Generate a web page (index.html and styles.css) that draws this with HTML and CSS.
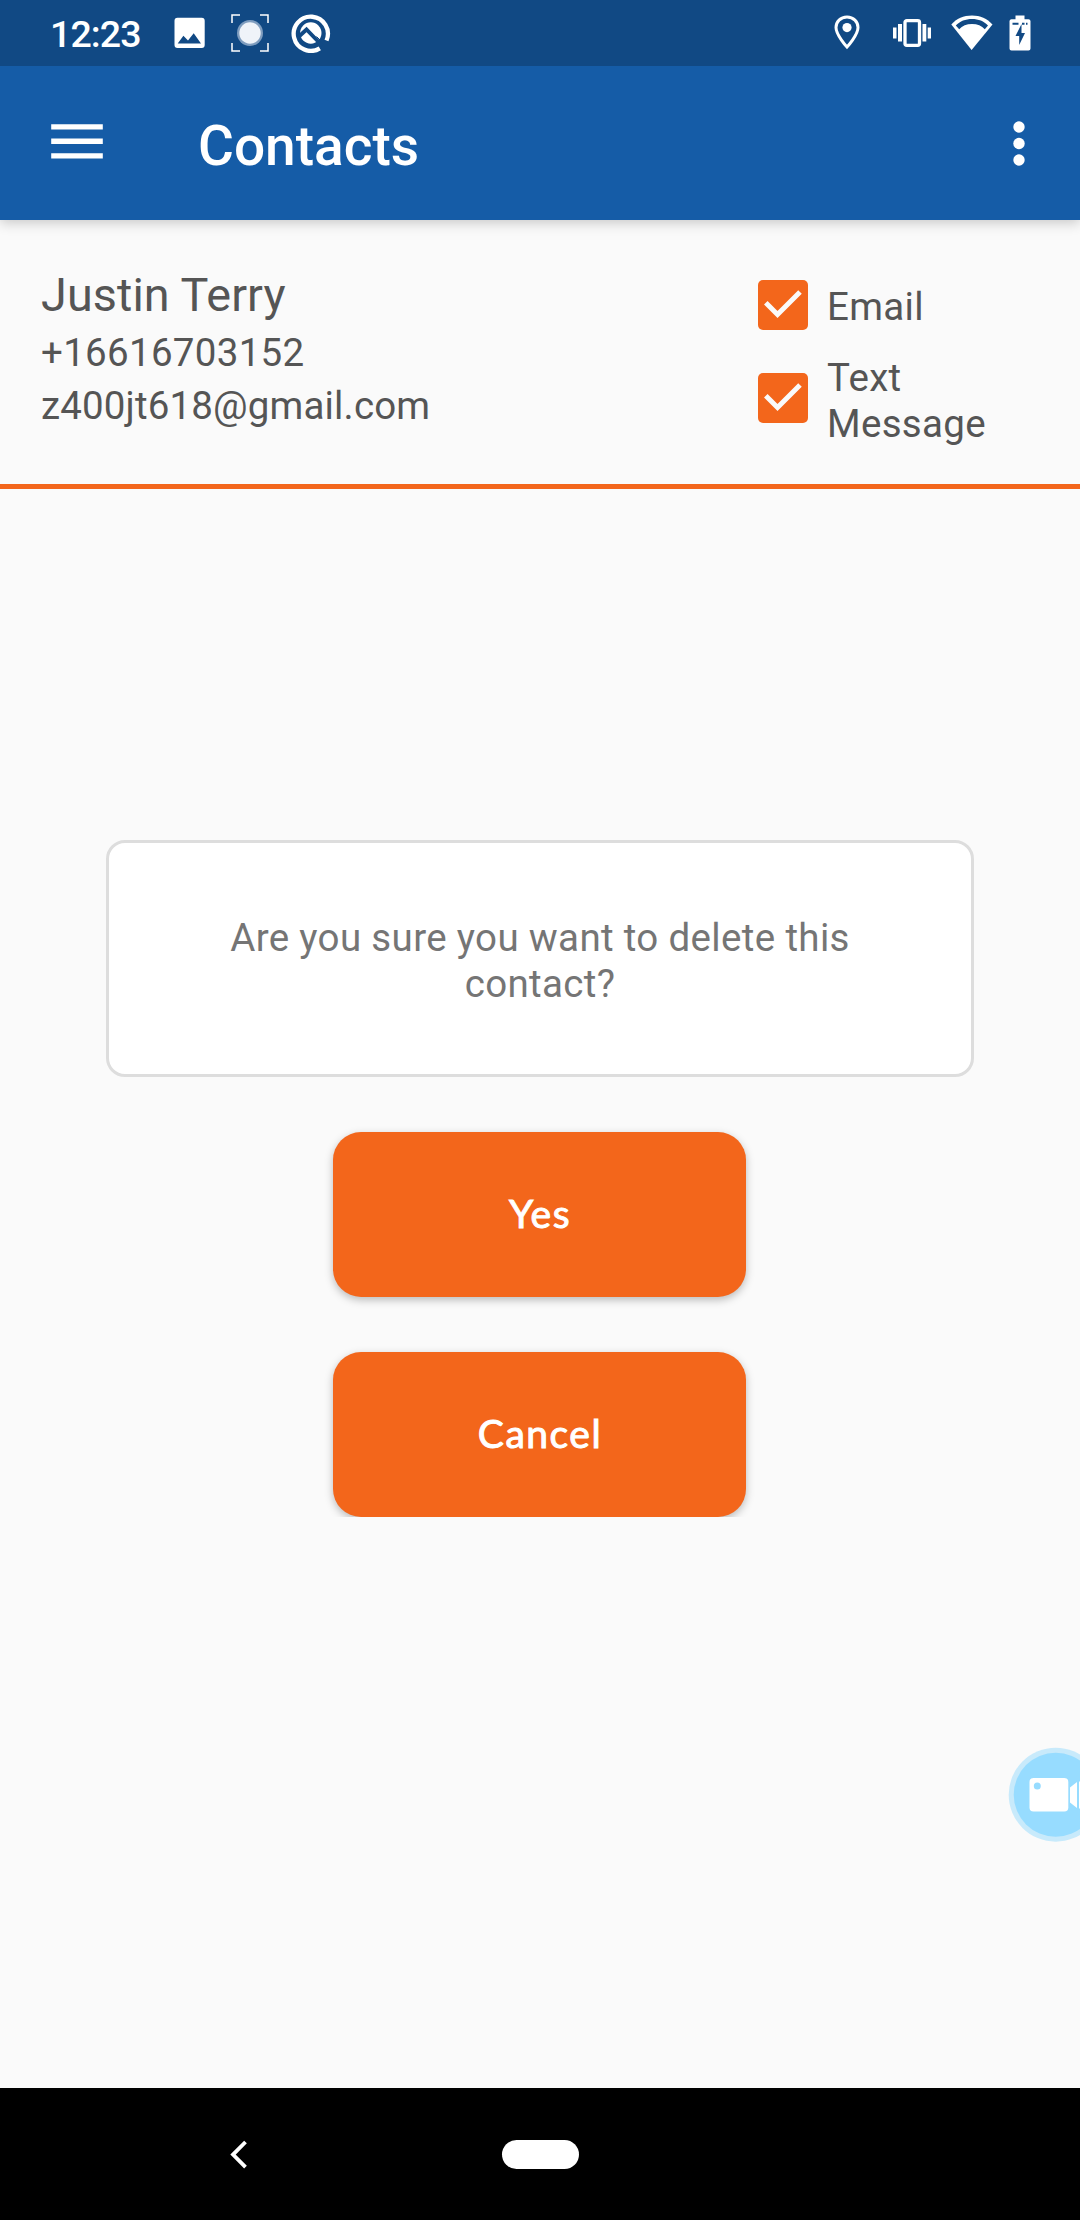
FILE: index.html
```html
<!DOCTYPE html>
<html lang="en">
<head>
<meta charset="utf-8">
<title>Contacts</title>
<link rel="stylesheet" href="styles.css">
</head>
<body>
<div class="screen">
  <header class="status">
    <span class="clock">12:23</span>
    <svg class="photo-icon" width="32" height="32" viewBox="0 0 32 32"><path fill="#fff" fill-rule="evenodd" d="M3.500.7h24.200a3 3 0 0 1 3 3v24.200a3 3 0 0 1-3 3H3.500a3 3 0 0 1-3-3V3.700a3 3 0 0 1 3-3ZM3.700 26.500H27L19.700 16.300 14 23.600 9.400 18.800Z"/></svg>
    <svg class="focus-icon" width="38" height="38" viewBox="0 0 38 38"><path d="M1 9V1h8M29 1h8v8M37 29v8h-8M9 37H1v-8" fill="none" stroke="#fff" stroke-width="1.500"/><circle cx="19" cy="19" r="13" fill="#7f9dbf"/><circle cx="19" cy="19" r="10.700" fill="#eff3f9"/></svg>
    <svg class="ring-icon" width="40" height="40" viewBox="0 0 40 40"><path d="M28.800 35.300A17.100 17.100 0 1 1 35.500 27.500" fill="none" stroke="#fff" stroke-width="4.300"/><circle cx="19.800" cy="20" r="10.700" fill="#fff"/><path d="M8.500 23 15.500 16.500 31 32.500" fill="none" stroke="#114984" stroke-width="3.800"/><path d="m25.500 23.500 10 10" stroke="#114984" stroke-width="1"/></svg>
    <svg class="pin-icon" width="26" height="36" viewBox="0 0 26 36"><path d="M13 2C6.500 2 2 6.700 2 12.500 2 20 13 32 13 32s11-12 11-19.500C24 6.700 19.500 2 13 2Z" fill="none" stroke="#fff" stroke-width="3"/><circle cx="13" cy="12.600" r="4.600" fill="#fff"/></svg>
    <svg class="vibrate-icon" width="38" height="28" viewBox="0 0 38 28"><rect x="12" y="1.700" width="14.500" height="24.600" rx="1.800" fill="none" stroke="#fff" stroke-width="3.300"/><path fill="#fff" d="M0 8.500h3.500v11H0zM5 5h4v17.500H5zM29.500 5h3.800v17.500h-3.800zM34.700 8.500H38v11h-3.300z"/></svg>
    <svg class="wifi-icon" width="42" height="36" viewBox="0 0 42 36"><path fill="#fff" d="M21 .5C12.500.5 5.500 3.600.3 9.500L20.600 35 41.500 9.500C36 3.600 29.300.5 21 .5Z"/><path d="M4.800 10.500C9 6 14.500 3.900 21 3.900S33 6 37 10.500L33.800 14.200C30.700 10.700 26.500 8.900 21 8.900s-9.700 1.800-12.800 5.300Z" fill="#114984"/></svg>
    <svg class="battery-icon" width="22" height="36" viewBox="0 0 22 36"><path fill="#fff" d="M6.500.5h9v3.700h4A2 2 0 0 1 21.500 6v27.500a2 2 0 0 1-2 2h-17a2 2 0 0 1-2-2V6a2 2 0 0 1 2-1.800h4Z"/><path fill="#114984" d="M12.500 9 6.500 21h3.700v9L16 18h-3.500zM3.500 7.800h6v2h-6zM13 7.800h2.500v2H13zM17 7.800h1.500v2H17z"/></svg>
  </header>
  <div class="toolbar">
    <svg class="menu-icon" width="52" height="36" viewBox="0 0 52 36"><path fill="#fff" d="M.2.200h51.600v5.300H.2zM.2 14.600h51.600v5.300H.2zM.2 29.300h51.600v5.300H.2z"/></svg>
    <h1 class="title">Contacts</h1>
    <svg class="more-icon" width="12" height="45" viewBox="0 0 12 45" fill="#fff"><circle cx="6" cy="6" r="5.700"/><circle cx="6" cy="22.500" r="5.700"/><circle cx="6" cy="39" r="5.700"/></svg>
  </div>
  <section class="contact">
    <div class="person">
      <div class="name">Justin Terry</div>
      <div class="phone">+16616703152</div>
      <div class="mail">z400jt618@gmail.com</div>
    </div>
    <div class="options">
      <div class="option">
        <svg class="check" width="50" height="50" viewBox="0 0 50 50"><rect width="50" height="50" rx="5" fill="#f3661b"/><path d="M7.800 22.700 19.500 34.400 42 11.900" fill="none" stroke="#fafafa" stroke-width="5"/></svg>
        <span class="option-label">Email</span>
      </div>
      <div class="option">
        <svg class="check" width="50" height="50" viewBox="0 0 50 50"><rect width="50" height="50" rx="5" fill="#f3661b"/><path d="M7.800 22.700 19.500 34.400 42 11.900" fill="none" stroke="#fafafa" stroke-width="5"/></svg>
        <span class="option-label two-line">Text<br>Message</span>
      </div>
    </div>
  </section>
  <main class="confirm">
    <p class="question">Are you sure you want to delete this<br>contact?</p>
    <div class="actions">
      <button class="action yes">Yes</button>
      <button class="action cancel">Cancel</button>
    </div>
  </main>
  <nav class="navbar">
    <svg class="back-icon" width="18" height="30" viewBox="0 0 18 30"><path d="M15.500 2 3 14.600l12.500 12.600" fill="none" stroke="#fff" stroke-width="3.800"/></svg>
    <span class="home"></span>
  </nav>
  <svg class="recorder" width="72" height="96" viewBox="0 0 72 96"><circle cx="47.700" cy="47.700" r="47" fill="#c8eafb"/><circle cx="47.700" cy="47.700" r="42" fill="#97dcff"/><rect x="21.500" y="31" width="38.800" height="33.500" rx="4" fill="#fff"/><circle cx="29.300" cy="39" r="3.500" fill="#97dcff"/><path fill="#fff" d="M62 40.500 69 35v26l-7-5.500zM71 34.500h1v27h-1z"/></svg>
</div>
</body>
</html>
```
FILE: styles.css
```css
* { box-sizing: border-box; }

body {
  margin: 0;
  font-family: Roboto, "Liberation Sans", sans-serif;
  font-size: 38.5px;
  line-height: 46px;
  letter-spacing: .3px;
  color: #555;
}

.screen {
  position: relative;
  display: flex;
  flex-direction: column;
  width: 1080px;
  height: 2220px;
  overflow: hidden;
  background: #fafafa;
}

svg { display: block; flex: none; }

/* System status bar, kept above the toolbar's shadow */
.status {
  position: relative;
  z-index: 1;
  display: flex;
  align-items: flex-start;
  height: 66px;
  padding: 14px 49px 0 50px;
  background: #114984;
  color: #fff;
}

.clock {
  width: 124px;
  margin-top: -3px;
  font-size: 37.5px;
  font-weight: 500;
  letter-spacing: -.9px;
  white-space: nowrap;
}

.photo-icon { margin-top: 3px; }
.focus-icon { margin-left: 25px; }
.ring-icon { margin: -1px 0 0 22px; }
.pin-icon { margin: 1px 0 0 auto; }
.vibrate-icon { margin: 5px 0 0 33px; }
.wifi-icon { margin: 1px 0 0 20px; }
.battery-icon { margin: 1px 0 0 16px; }

/* App bar */
.toolbar {
  display: flex;
  align-items: flex-start;
  height: 154px;
  padding: 48px 55px 0 51px;
  background: #155ca7;
  color: #fff;
  box-shadow: 0 3px 12px rgba(0, 0, 0, .2);
}

.menu-icon { margin-top: 10px; }
.title {
  margin: 0 0 0 95px;
  font-size: 55px;
  line-height: 64px;
  font-weight: 500;
  letter-spacing: 0;
}
.more-icon { margin: 7px 0 0 auto; }

/* Selected contact */
.contact {
  display: flex;
  height: 269px;
  padding: 47px 0 0 41px;
  border-bottom: 5px solid #f3661b;
}

.person {
  display: flex;
  flex-direction: column;
  gap: 7px;
  width: 717px;
}

.name { font-size: 46.75px; line-height: 56px; letter-spacing: .1px; }
.mail { letter-spacing: .15px; }

.options {
  display: flex;
  flex-direction: column;
  gap: 19px;
  padding-top: 13px;
}

.option { display: flex; align-items: center; gap: 19px; }
.option-label { padding-top: 4px; }
.two-line { padding-top: 6px; }

/* Delete confirmation */
.confirm {
  display: flex;
  flex: 1;
  flex-direction: column;
  align-items: center;
  padding-top: 351px;
}

.question {
  width: 868px;
  height: 237px;
  margin: 0;
  padding-top: 72px;
  border: 3px solid #ddd;
  border-radius: 19px;
  background: #fff;
  color: #757575;
  text-align: center;
  letter-spacing: .34px;
}

/* The column ends at the last button, cutting off its shadow */
.actions {
  display: flex;
  flex-direction: column;
  gap: 55px;
  margin-top: 35px;
  padding: 20px 21px 0 20px;
  overflow: hidden;
}

.action {
  width: 413px;
  height: 165px;
  padding: 0 0 3px 1px;
  border: 0;
  border-radius: 28px;
  background: #f3661b;
  box-shadow: 0 3px 8px rgba(0, 0, 0, .26);
  color: #fff;
  font: 400 39px/46px Lato, Roboto, sans-serif;
  letter-spacing: 1.5px;
  -webkit-text-stroke: 1px #fff;
}

/* System navigation */
.navbar {
  display: flex;
  align-items: flex-start;
  height: 132px;
  padding: 52px 0 0 230px;
  background: #000;
}

.home {
  width: 77px;
  height: 29px;
  margin-left: 254px;
  border-radius: 15px;
  background: #fff;
}

/* Floating screen recorder bubble */
.recorder { position: absolute; top: 1747px; right: 0; }
```
